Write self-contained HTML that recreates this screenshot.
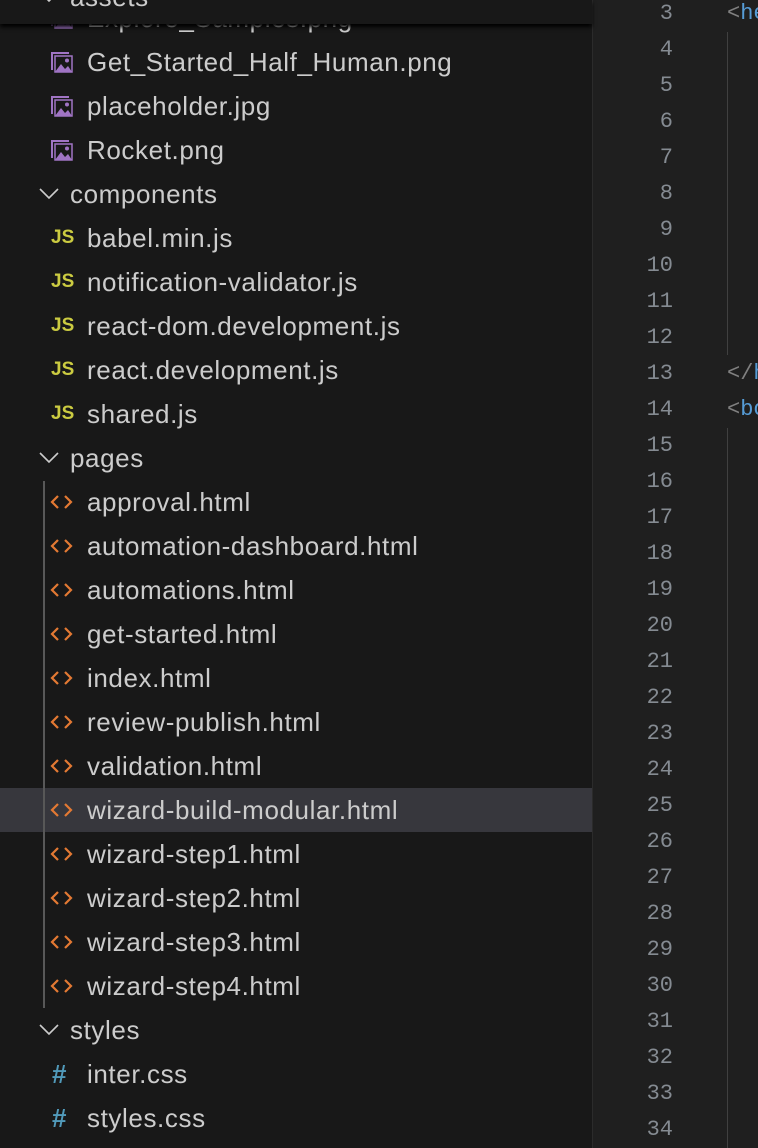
<!DOCTYPE html>
<html><head><style>
body{margin:0;width:758px;height:1148px;background:#181818;overflow:hidden;font-family:"Liberation Sans",sans-serif;position:relative}
.side{position:absolute;left:0;top:0;width:592px;height:1148px;background:#181818}
.ed{position:absolute;left:593px;top:0;width:165px;height:1148px;background:#1f1f1f}
.sep{position:absolute;left:592px;top:0;width:1px;height:1148px;background:#2b2b2b}
.row{position:absolute;left:0;width:592px;height:44px;line-height:44px;color:#cccccc;font-size:26px;letter-spacing:0.6px;white-space:nowrap}
.row .t{position:absolute;left:87px}
.row.f .t{left:70px}
.chev{position:absolute;left:38px;top:14px}
.ic{position:absolute;left:50px;top:11px}
.js{position:absolute;left:51px;top:0;color:#cbcb41;font-size:19px;font-weight:bold;letter-spacing:0}
.hash{position:absolute;left:52px;top:0;color:#519aba;font-size:26px;font-weight:bold}
.sel{background:#37373d}
.guide{position:absolute;left:43px;top:481px;width:2px;height:527px;background:#585858}
.ln{position:absolute;left:593px;width:80px;text-align:right;color:#858b92;font-family:"Liberation Mono",monospace;font-size:22px;height:36px;line-height:36px}
.code{position:absolute;left:727px;font-family:"Liberation Mono",monospace;font-size:22px;line-height:36px;color:#808080;white-space:nowrap}
.code b{font-weight:normal;color:#569cd6}
.ig{position:absolute;left:727px;width:1px;background:#404040}
.sticky{position:absolute;left:0;top:0;width:592px;height:24px;background:#181818;box-shadow:0 3px 4px #000;overflow:hidden}
</style></head><body>
<div class="side"></div>
<div class="ed"></div>
<div class="sep"></div>
<div id="tree"></div>
<div class="guide"></div>
<div id="lines"></div>
<div class="code" style="top:-4px">&lt;<b>he</b></div>
<div class="code" style="top:356px">&lt;/<b>h</b></div>
<div class="code" style="top:392px">&lt;<b>bo</b></div>
<div class="ig" style="top:32px;height:323px"></div>
<div class="ig" style="top:428px;height:720px"></div>
<script>
var img='<svg class="ic" width="24" height="22" viewBox="0 0 24 22"><path d="M1 1h18v2H3v16H1z" fill="#a074c4"/><rect x="5" y="5" width="17" height="16" fill="none" stroke="#a074c4" stroke-width="1.5"/><circle cx="17" cy="9.5" r="2" fill="#a074c4"/><path d="M5 21l6-8 4 5 3-3 4 6z" fill="#a074c4"/></svg>';
var htm='<svg class="ic" width="24" height="22" viewBox="0 0 24 22"><path d="M8 5L2 11l6 6M15 5l6 6-6 6" fill="none" stroke="#e37933" stroke-width="2.2"/></svg>';
var chev='<svg class="chev" width="22" height="14" viewBox="0 0 22 14"><path d="M2 3l9 9 9-9" fill="none" stroke="#cccccc" stroke-width="1.6"/></svg>';
var items=[
['i','Get_Started_Half_Human.png'],['i','placeholder.jpg'],['i','Rocket.png'],
['f','components'],['j','babel.min.js'],['j','notification-validator.js'],['j','react-dom.development.js'],['j','react.development.js'],['j','shared.js'],
['f','pages'],['h','approval.html'],['h','automation-dashboard.html'],['h','automations.html'],['h','get-started.html'],['h','index.html'],['h','review-publish.html'],['h','validation.html'],['h','wizard-build-modular.html'],['h','wizard-step1.html'],['h','wizard-step2.html'],['h','wizard-step3.html'],['h','wizard-step4.html'],
['f','styles'],['c','inter.css'],['c','styles.css']];
var s='<div class="row" style="top:-4px">'+img+'<span class="t">Explore_Samples.png</span></div>';
items.forEach(function(it,i){
 var top=40+44*i, ic='', cls='row';
 if(it[0]=='i')ic=img;else if(it[0]=='h')ic=htm;else if(it[0]=='j')ic='<span class="js">JS</span>';else if(it[0]=='c')ic='<span class="hash">#</span>';else{ic=chev;cls+=' f';}
 if(it[1]=='wizard-build-modular.html')cls+=' sel';
 s+='<div class="'+cls+'" style="top:'+top+'px">'+ic+'<span class="t">'+it[1]+'</span></div>';
});
s+='<div class="sticky"><div class="row f" style="top:-25px">'+chev+'<span class="t">assets</span></div></div>';
document.getElementById('tree').innerHTML=s;
var l='';for(var n=3;n<=34;n++){l+='<div class="ln" style="top:'+(-4+36*(n-3))+'px">'+n+'</div>';}
document.getElementById('lines').innerHTML=l;
</script>
</body></html>
